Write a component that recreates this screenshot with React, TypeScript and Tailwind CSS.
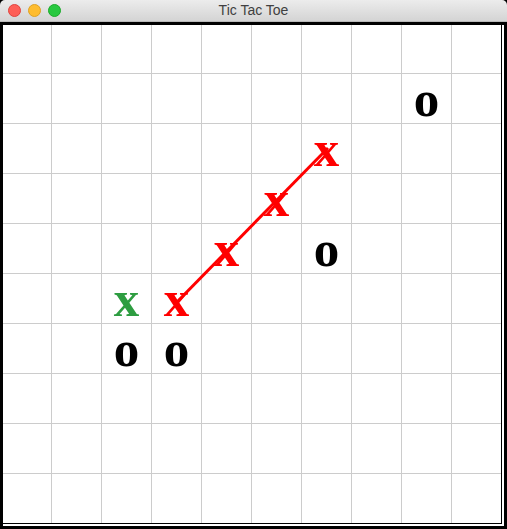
const marks: { col: number; row: number; ch: string; color: string }[] = [
  { col: 8, row: 1, ch: "o", color: "text-black" },
  { col: 6, row: 2, ch: "x", color: "text-[#ff0000]" },
  { col: 5, row: 3, ch: "x", color: "text-[#ff0000]" },
  { col: 4, row: 4, ch: "x", color: "text-[#ff0000]" },
  { col: 6, row: 4, ch: "o", color: "text-black" },
  { col: 2, row: 5, ch: "x", color: "text-[#2e9d41]" },
  { col: 3, row: 5, ch: "x", color: "text-[#ff0000]" },
  { col: 2, row: 6, ch: "o", color: "text-black" },
  { col: 3, row: 6, ch: "o", color: "text-black" },
];

function TitleBar() {
  return (
    <div className="relative flex h-[22px] items-center rounded-t-[5px] border-b border-[#b9b9b9] bg-gradient-to-b from-[#ececec] to-[#d4d4d4] px-[8px]">
      <div className="flex gap-[7px]">
        <span className="h-[13px] w-[13px] rounded-full border border-[#e0443e] bg-[#fe5f57]" />
        <span className="h-[13px] w-[13px] rounded-full border border-[#dea123] bg-[#febc2e]" />
        <span className="h-[13px] w-[13px] rounded-full border border-[#1aab29] bg-[#28c840]" />
      </div>
      <div className="absolute inset-0 flex items-center justify-center font-['Liberation_Sans',Arial,sans-serif] text-[14px] text-[#404040]">
        Tic Tac Toe
      </div>
    </div>
  );
}

function Board() {
  const cells = [];
  for (let row = 0; row < 10; row++) {
    for (let col = 0; col < 10; col++) {
      const m = marks.find((k) => k.col === col && k.row === row);
      cells.push(
        <div
          key={`${row}-${col}`}
          className="flex h-[50px] w-[50px] items-center justify-center border-l border-t border-[#cccccc]"
        >
          {m && (
            <span
              className={`font-['Liberation_Serif','Times_New_Roman',serif] text-[51px] font-bold leading-[44px] ${m.color}`}
            >
              {m.ch}
            </span>
          )}
        </div>
      );
    }
  }
  return (
    <div className="relative -ml-[2px] -mt-[2px] w-[501px] border-b border-r border-black">
      <div className="grid grid-cols-[repeat(10,50px)]">{cells}</div>
      <svg className="absolute left-0 top-0" width="501" height="501">
        <line x1="175" y1="280" x2="327" y2="125" stroke="#ff0000" strokeWidth="3" />
      </svg>
    </div>
  );
}

export default function App() {
  return (
    <div className="h-[529px] w-[507px] overflow-hidden bg-black">
      <TitleBar />
      <div className="pl-[3px] pt-[3px]">
        <div className="h-[501px] w-[501px] overflow-hidden bg-white">
          <Board />
        </div>
      </div>
    </div>
  );
}
